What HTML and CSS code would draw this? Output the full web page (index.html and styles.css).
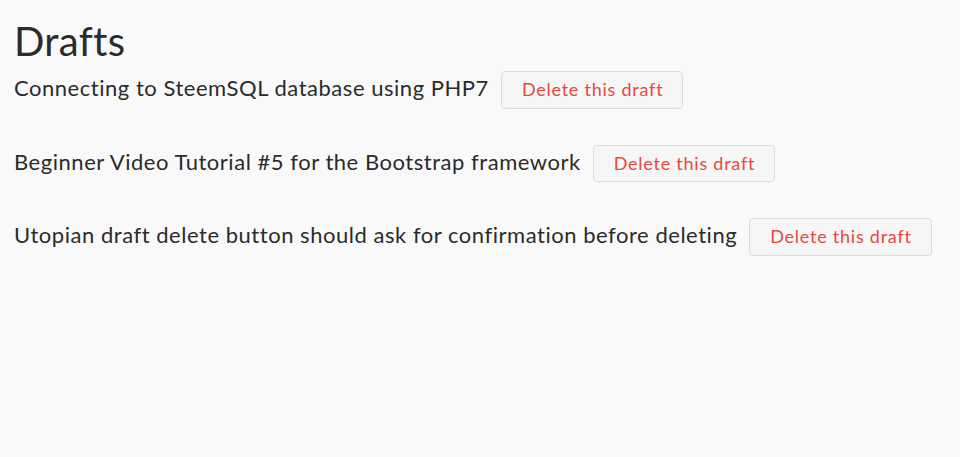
FILE: index.html
```html
<!DOCTYPE html>
<html lang="en">
<head>
<meta charset="utf-8">
<title>Drafts</title>
<link rel="stylesheet" href="styles.css">
</head>
<body>
<main class="page">
  <h1 class="title">Drafts</h1>
  <div class="drafts">
    <div class="draft">
      <span class="draft-title">Connecting to SteemSQL database using PHP7</span>
      <button class="delete-btn" type="button">Delete this draft</button>
    </div>
    <div class="draft">
      <span class="draft-title">Beginner Video Tutorial #5 for the Bootstrap framework</span>
      <button class="delete-btn" type="button">Delete this draft</button>
    </div>
    <div class="draft">
      <span class="draft-title">Utopian draft delete button should ask for confirmation before deleting</span>
      <button class="delete-btn" type="button">Delete this draft</button>
    </div>
  </div>
</main>
</body>
</html>
```

FILE: styles.css
```css
html, body {
  margin: 0;
  padding: 0;
  background: #f9f9f9;
}

body {
  font-family: Lato, "Liberation Sans", sans-serif;
  color: #2b2b2b;
}

.page {
  padding: 17px 14px;
}

.title {
  margin: 0 0 6px 0;
  font-size: 40px;
  font-weight: 400;
  line-height: 1.2;
  letter-spacing: 0.3px;
}

.drafts {
  display: flex;
  flex-direction: column;
  gap: 36px;
}

.draft {
  display: flex;
  align-items: baseline;
  gap: 12px;
}

.draft-title {
  font-size: 22px;
  line-height: 1.2;
  letter-spacing: 0.53px;
}

.delete-btn {
  font-family: Lato, "Liberation Sans", sans-serif;
  font-size: 18px;
  line-height: 1.2;
  letter-spacing: 0.76px;
  color: #e8483f;
  background: #f6f6f6;
  border: 1px solid #dcdcdc;
  border-radius: 4px;
  padding: 7px 19px 7px 20px;
  cursor: pointer;
}
```
